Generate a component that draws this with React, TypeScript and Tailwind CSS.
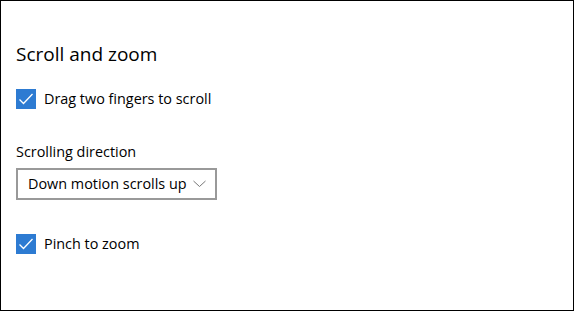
import React from "react";

const Check: React.FC<{ label: string }> = ({ label }) => (
	<div className="flex items-center h-5">
		<div className="w-5 h-5 bg-[#2d7bd2] flex items-center justify-center shrink-0">
			<svg width="20" height="20" viewBox="0 0 20 20" fill="none">
				<path d="M3.5 10.5 L7.5 14.5 L16.5 5" stroke="#fff" strokeWidth="1.3" />
			</svg>
		</div>
		<span className="ml-2 text-[14.4px] leading-5 text-black whitespace-nowrap">
			{label}
		</span>
	</div>
);

export default function App() {
	return (
		<div
			className="w-[574px] h-[311px] border border-black bg-white pl-[15px] flex flex-col"
			style={{ fontFamily: '"Open Sans", "Noto Sans", sans-serif' }}>
			<h2 className="mt-[39px] text-[19px] leading-7 text-black">
				Scroll and zoom
			</h2>
			<div className="mt-[21px]">
				<Check label="Drag two fingers to scroll" />
			</div>
			<div className="mt-[33px] text-[14.4px] leading-5 text-black whitespace-nowrap">
				Scrolling direction
			</div>
			<div className="mt-[6px] w-[201px] h-[32px] border-2 border-[#999] flex items-center pl-[10px] pr-[9px] justify-between">
				<span className="text-[14.4px] leading-5 text-black whitespace-nowrap">
					Down motion scrolls up
				</span>
				<svg width="13" height="8" viewBox="0 0 13 8" fill="none">
					<path d="M0.5 1 L6.5 6.5 L12.5 1" stroke="#777" strokeWidth="1" />
				</svg>
			</div>
			<div className="mt-[34px]">
				<Check label="Pinch to zoom" />
			</div>
		</div>
	);
}
